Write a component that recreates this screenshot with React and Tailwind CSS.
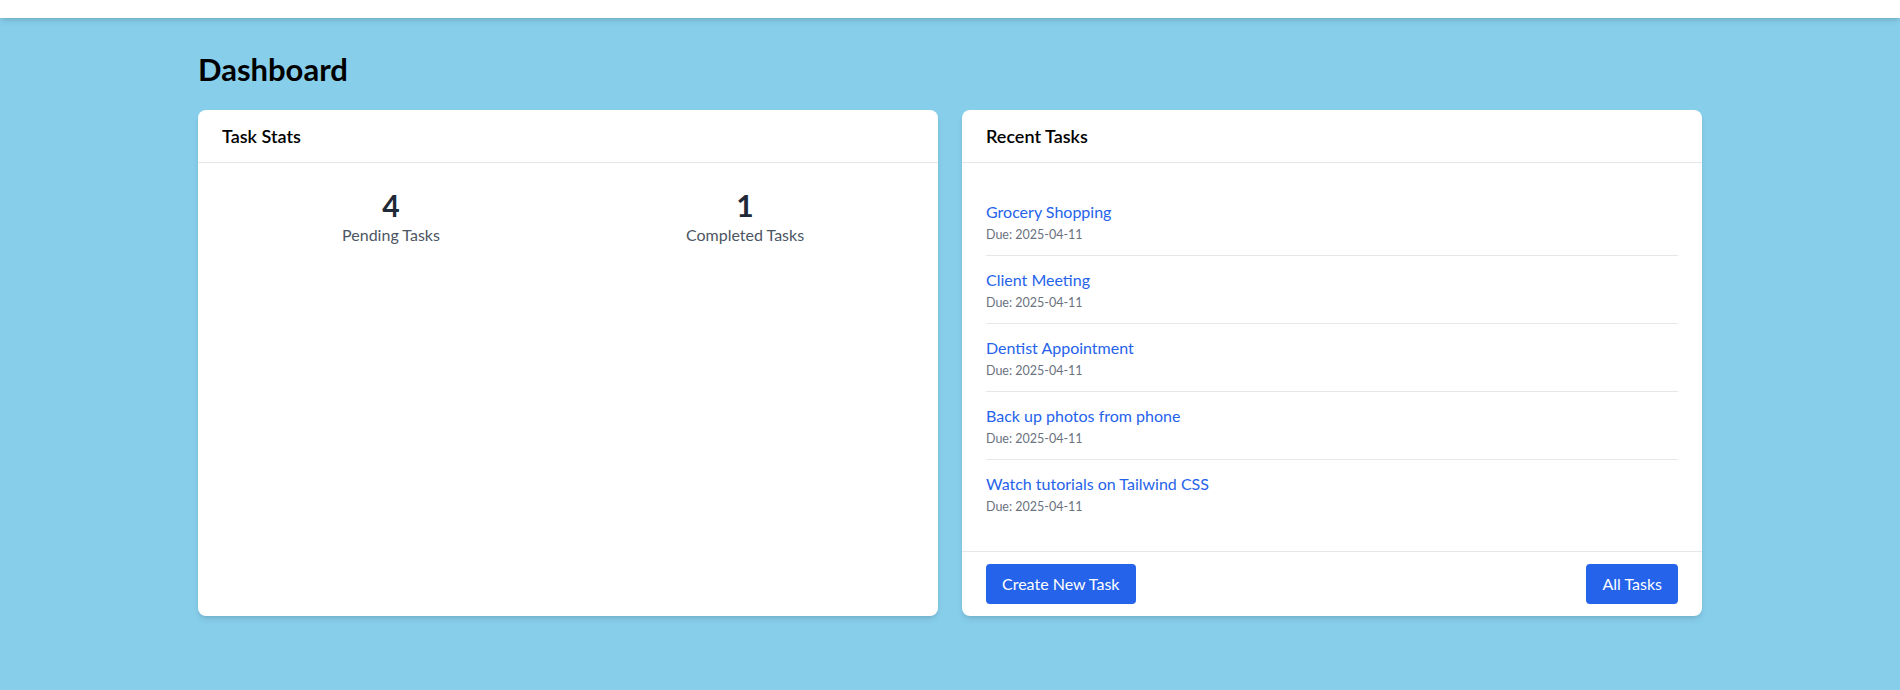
const tasks = [
  { title: "Grocery Shopping", due: "2025-04-11" },
  { title: "Client Meeting", due: "2025-04-11" },
  { title: "Dentist Appointment", due: "2025-04-11" },
  { title: "Back up photos from phone", due: "2025-04-11" },
  { title: "Watch tutorials on Tailwind CSS", due: "2025-04-11" },
];

function Card({ title, children, footer }) {
  return (
    <div className="bg-white rounded-lg shadow-md flex flex-col">
      <div className="px-6 py-3 border-b border-[#e5e7eb]">
        <h2 className="text-lg font-semibold text-black">{title}</h2>
      </div>
      <div className="flex-1">{children}</div>
      {footer && <div className="px-6 py-3 border-t border-[#e5e7eb]">{footer}</div>}
    </div>
  );
}

export default function App() {
  return (
    <div className="min-h-screen bg-[#87ceeb] font-['Lato',sans-serif]">
      {/* top nav strip */}
      <div className="h-[18px] bg-white shadow-md"></div>

      <main className="max-w-[1504px] mx-auto pt-[33px]">
        <h1 className="text-[31px] leading-9 font-bold text-black mb-[23px]">Dashboard</h1>

        <div className="grid grid-cols-2 gap-6">
          <Card title="Task Stats">
            <div className="grid grid-cols-2 gap-4 p-6 text-center">
              <div>
                <p className="text-3xl font-bold text-[#1f2937]">4</p>
                <p className="text-base text-[#4b5563]">Pending Tasks</p>
              </div>
              <div>
                <p className="text-3xl font-bold text-[#1f2937]">1</p>
                <p className="text-base text-[#4b5563]">Completed Tasks</p>
              </div>
            </div>
          </Card>

          <Card
            title="Recent Tasks"
            footer={
              <div className="flex justify-between">
                <button className="bg-[#2563eb] hover:bg-[#1d4ed8] text-white text-base px-4 py-2 rounded">
                  Create New Task
                </button>
                <button className="bg-[#2563eb] hover:bg-[#1d4ed8] text-white text-base px-4 py-2 rounded">
                  All Tasks
                </button>
              </div>
            }
          >
            <ul className="px-6 pt-[25px] pb-6 divide-y divide-[#e5e7eb]">
              {tasks.map((t, i) => (
                <li key={i} className="py-3">
                  <a href="#" className="block text-base text-[#2563eb] hover:underline">
                    {t.title}
                  </a>
                  <p className="mt-[3px] text-[12.5px] leading-4 text-[#6b7280]">Due: {t.due}</p>
                </li>
              ))}
            </ul>
          </Card>
        </div>
      </main>
    </div>
  );
}
